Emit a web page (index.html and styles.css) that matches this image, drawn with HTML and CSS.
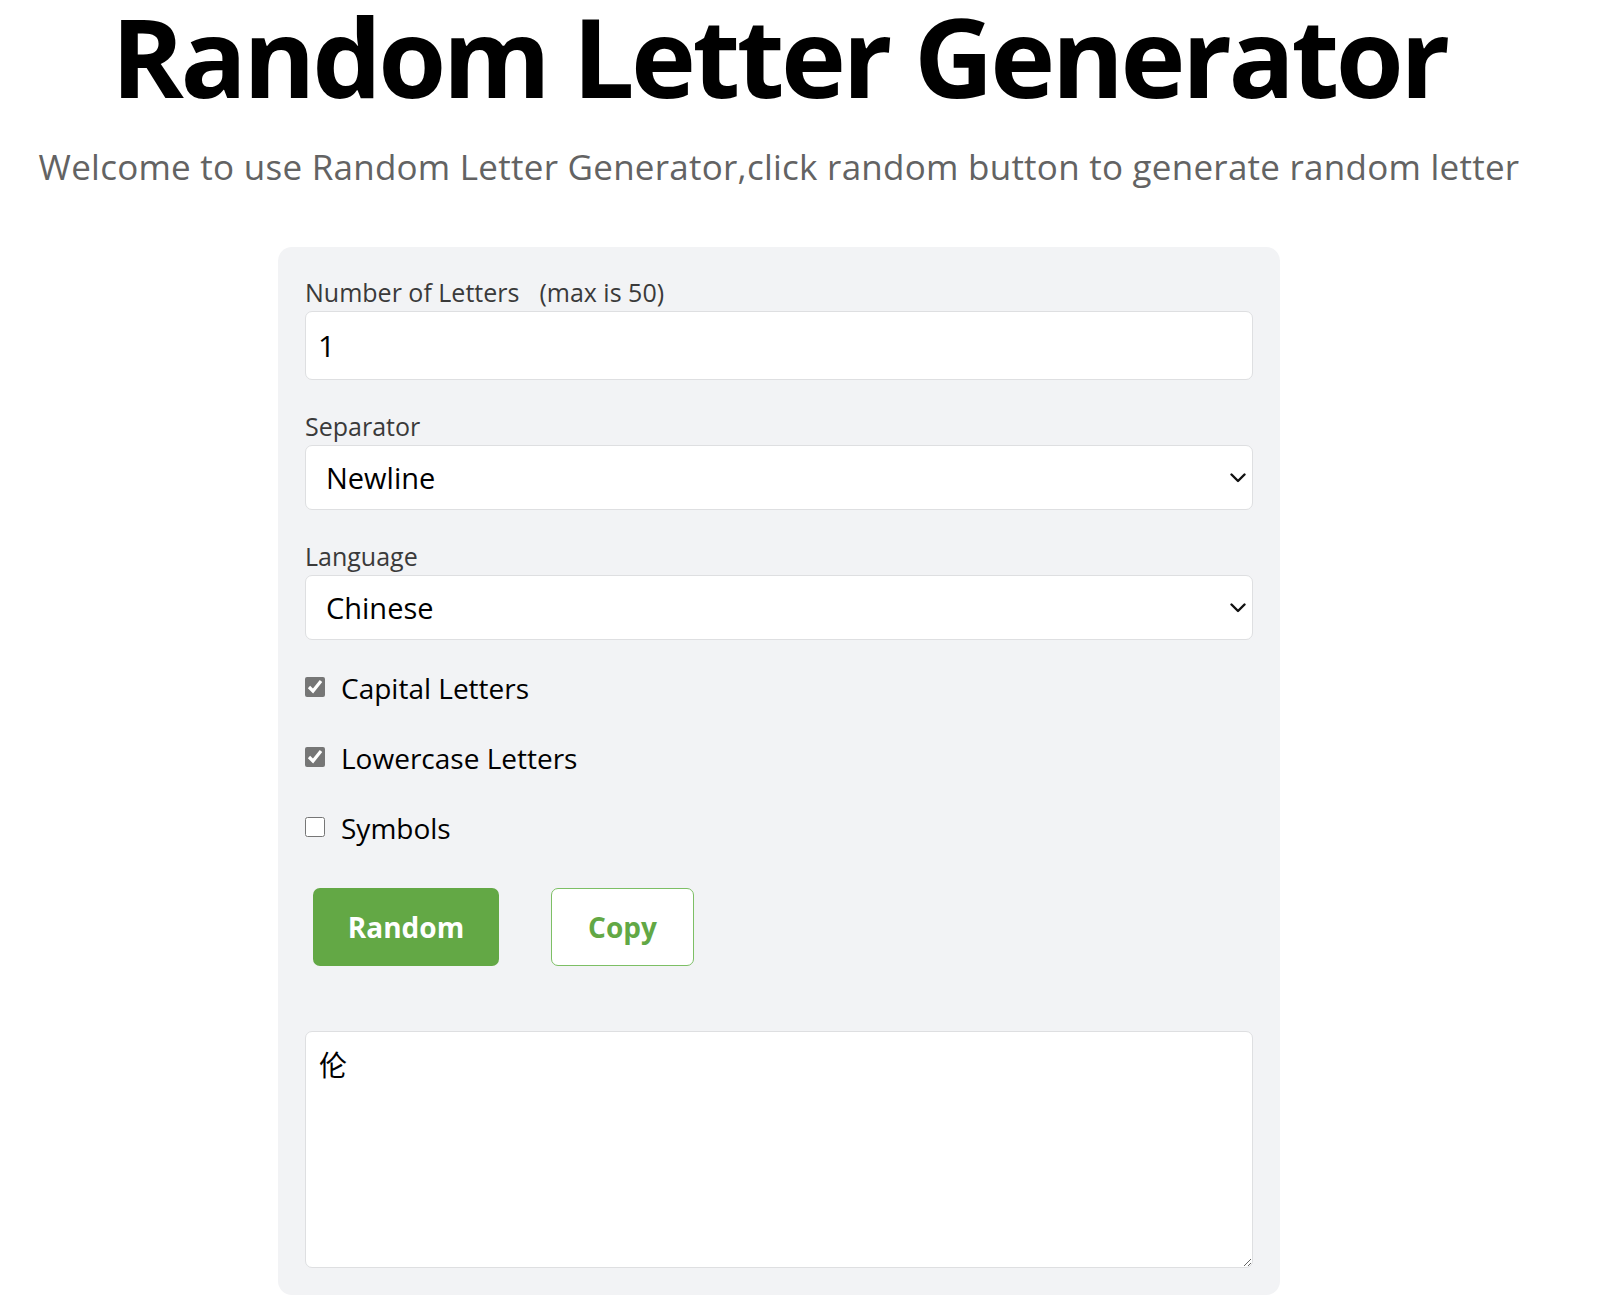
FILE: index.html
```html
<!DOCTYPE html>
<html lang="en">
<head>
<meta charset="utf-8">
<title>Random Letter Generator</title>
<link rel="stylesheet" href="styles.css">
</head>
<body>
<div class="page">
  <h1 class="title">Random Letter Generator</h1>
  <p class="subtitle">Welcome to use Random Letter Generator,click random button to generate random letter</p>

  <div class="card">
    <div class="group">
      <label class="label" for="num">Number of Letters<span class="hint">(max is 50)</span></label>
      <input id="num" class="field" type="text" value="1">
    </div>

    <div class="group">
      <label class="label" for="sep">Separator</label>
      <div class="select-wrap">
        <select id="sep" class="field select">
          <option>Newline</option>
        </select>
        <svg class="chevron" width="16" height="10" viewBox="0 0 16 10"><path d="M1.5 1.5 L8 8 L14.5 1.5" fill="none" stroke="#111" stroke-width="2.4" stroke-linecap="round" stroke-linejoin="round"/></svg>
      </div>
    </div>

    <div class="group">
      <label class="label" for="lang">Language</label>
      <div class="select-wrap">
        <select id="lang" class="field select">
          <option>Chinese</option>
        </select>
        <svg class="chevron" width="16" height="10" viewBox="0 0 16 10"><path d="M1.5 1.5 L8 8 L14.5 1.5" fill="none" stroke="#111" stroke-width="2.4" stroke-linecap="round" stroke-linejoin="round"/></svg>
      </div>
    </div>

    <div class="checks">
      <label class="check"><input type="checkbox" checked><span>Capital Letters</span></label>
      <label class="check"><input type="checkbox" checked><span>Lowercase Letters</span></label>
      <label class="check"><input type="checkbox"><span>Symbols</span></label>
    </div>

    <div class="buttons">
      <button class="btn btn-primary" type="button">Random</button>
      <button class="btn btn-outline" type="button">Copy</button>
    </div>

    <textarea class="output">伦</textarea>
  </div>
</div>
</body>
</html>
```

FILE: styles.css
```css
* {
  box-sizing: border-box;
}

html, body {
  margin: 0;
  padding: 0;
  background: #ffffff;
}

body {
  font-family: "Open Sans", "Noto Sans", "Noto Sans CJK SC", sans-serif;
  color: #000;
}

.page {
  width: 1558px;
}

.title {
  margin: 0;
  font-size: 110px;
  line-height: 110px;
  font-weight: 700;
  text-align: center;
  color: #000;
  letter-spacing: -3.5px;
}

.subtitle {
  margin: 33px 0 0;
  font-size: 35px;
  line-height: normal;
  letter-spacing: 0.25px;
  text-align: center;
  color: #636363;
}

.card {
  width: 1002px;
  margin: 57px auto 0;
  padding: 28px 27px 27px;
  background: #f2f3f5;
  border-radius: 14px;
}

.group {
  margin-bottom: 29px;
}

.label {
  display: block;
  font-size: 25px;
  line-height: normal;
  color: #3a3a3a;
  margin-bottom: 2px;
}

.hint {
  margin-left: 20px;
}

.field {
  display: block;
  width: 100%;
  height: 69px;
  border: 1px solid #dedfe1;
  border-radius: 7px;
  background: #fff;
  font-family: inherit;
  font-size: 30px;
  color: #000;
  padding: 0 12px;
  outline: none;
}

.select-wrap {
  position: relative;
}

.select {
  height: 65px;
  appearance: none;
  -webkit-appearance: none;
  font-size: 29px;
  padding: 0 50px 0 20px;
}

.chevron {
  position: absolute;
  right: 7px;
  top: 28px;
  pointer-events: none;
}

.checks {
  margin-top: 28px;
}

.check {
  display: flex;
  align-items: center;
  gap: 16px;
  height: 37px;
  margin-bottom: 33px;
  font-size: 28px;
  color: #000;
}

.check input {
  margin: 0;
  width: 20px;
  height: 20px;
  accent-color: #767676;
  position: relative;
  top: -1px;
}

.buttons {
  display: flex;
  gap: 52px;
  padding-left: 8px;
  margin-top: 42px;
}

.btn {
  height: 78px;
  border-radius: 7px;
  font-family: inherit;
  font-size: 28px;
  font-weight: 700;
  cursor: pointer;
}

.btn-primary {
  width: 186px;
  background: #63a845;
  color: #fff;
  border: none;
}

.btn-outline {
  width: 143px;
  background: #fff;
  color: #62a845;
  border: 1.5px solid #7dbf65;
}

.output {
  display: block;
  width: 100%;
  height: 237px;
  margin-top: 65px;
  border: 1px solid #dedfe1;
  border-radius: 7px;
  background: #fff;
  padding: 12px 13px;
  font-family: "Open Sans", "Noto Sans CJK SC", sans-serif;
  font-size: 28px;
  color: #000;
  resize: vertical;
  outline: none;
}
```
